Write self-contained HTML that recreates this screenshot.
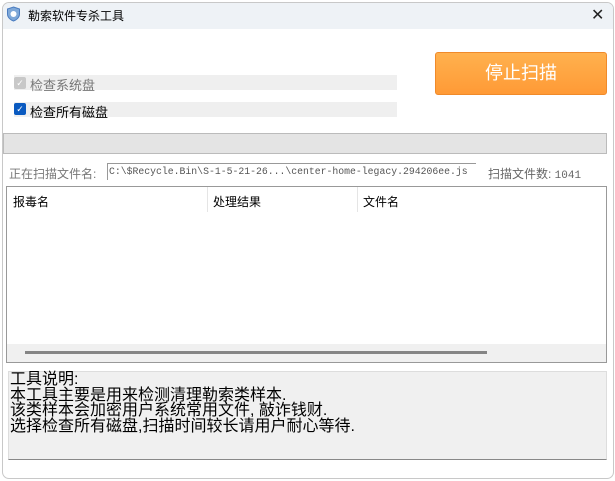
<!DOCTYPE html>
<html><head><meta charset="utf-8"><style>
*{margin:0;padding:0;box-sizing:border-box}
body{width:615px;height:481px;background:#fff;font-family:"Liberation Sans","WenQuanYi Zen Hei",sans-serif;position:relative;overflow:hidden}
.win{position:absolute;left:2px;top:2px;width:612px;height:477px;border:1px solid #c8c8c8;border-radius:7px;background:#fff;overflow:hidden}
.title{position:absolute;left:0;top:0;width:100%;height:26px;background:#eef2f6}
.a{position:absolute}
.t{font-size:12px;color:#000;white-space:nowrap}
</style></head><body>
<div class="win">
<div class="title"></div>
</div>
<svg class="a" style="left:6px;top:6px" width="15" height="16" viewBox="0 0 15 16"><path d="M7.5 1 L13.5 3 V8 C13.5 11.5 10.5 14 7.5 15 C4.5 14 1.5 11.5 1.5 8 V3 Z" fill="#7fa8d8" stroke="#4a7cc0"/><circle cx="7.5" cy="8" r="3" fill="#fff"/></svg>
<div class="a t" style="left:28px;top:7px;font-size:12px">勒索软件专杀工具</div>
<div class="a" style="left:591px;top:5px;font-size:16px;color:#222">✕</div>

<div class="a" style="left:14px;top:75px;width:383px;height:15px;background:#efefef"></div>
<div class="a" style="left:14px;top:77px;width:12px;height:12px;background:#c8c8c8;border-radius:2px;color:#fff;font-size:9px;text-align:center;line-height:12px">✓</div>
<div class="a t" style="left:30px;top:75px;color:#777;font-size:13px">检查系统盘</div>
<div class="a" style="left:14px;top:102px;width:383px;height:15px;background:#efefef"></div>
<div class="a" style="left:14px;top:103px;width:12px;height:12px;background:#0a5ac0;border-radius:2px;color:#fff;font-size:9px;text-align:center;line-height:12px">✓</div>
<div class="a t" style="left:30px;top:102px;font-size:13px">检查所有磁盘</div>

<div class="a" style="left:435px;top:52px;width:172px;height:43px;border:1px solid #f08a2a;border-radius:3px;background:linear-gradient(#ffb14e,#ff9a36);color:#fff;font-size:18px;text-align:center;line-height:41px">停止扫描</div>

<div class="a" style="left:3px;top:133px;width:604px;height:21px;background:#e4e4e4;border:1px solid #bbb"></div>

<div class="a t" style="left:9px;top:165px;color:#777">正在扫描文件名:</div>
<div class="a" style="left:107px;top:163px;width:369px;height:17px;border-top:1px solid #999;border-left:1px solid #999;font-family:'Liberation Mono',monospace;font-size:9.8px;color:#555;line-height:15px;padding-left:1px;white-space:nowrap;overflow:hidden">C:\$Recycle.Bin\S-1-5-21-26...\center-home-legacy.294206ee.js</div>
<div class="a t" style="left:488px;top:165px;color:#666">扫描文件数: <span style="font-family:'Liberation Mono',monospace;font-size:11px">1041</span></div>

<div class="a" style="left:6px;top:186px;width:601px;height:177px;border:1px solid #999;background:#fff"></div>
<div class="a t" style="left:13px;top:193px">报毒名</div>
<div class="a" style="left:207px;top:187px;width:1px;height:25px;background:#e5e5e5"></div>
<div class="a t" style="left:213px;top:193px">处理结果</div>
<div class="a" style="left:357px;top:187px;width:1px;height:25px;background:#e5e5e5"></div>
<div class="a t" style="left:363px;top:193px">文件名</div>
<div class="a" style="left:7px;top:344px;width:599px;height:18px;background:#f0f0f0"></div>
<div class="a" style="left:25px;top:351px;width:462px;height:3px;background:#858585"></div>

<div class="a" style="left:8px;top:371px;width:599px;height:89px;background:#f0f0f0;border:1px solid #ddd;border-bottom:1px solid #888"></div>
<div class="a" style="left:10px;top:372px;font-size:16px;line-height:15.5px;color:#000;white-space:nowrap">工具说明:<br>本工具主要是用来检测清理勒索类样本.<br>该类样本会加密用户系统常用文件, 敲诈钱财.<br>选择检查所有磁盘,扫描时间较长请用户耐心等待.</div>
</body></html>
